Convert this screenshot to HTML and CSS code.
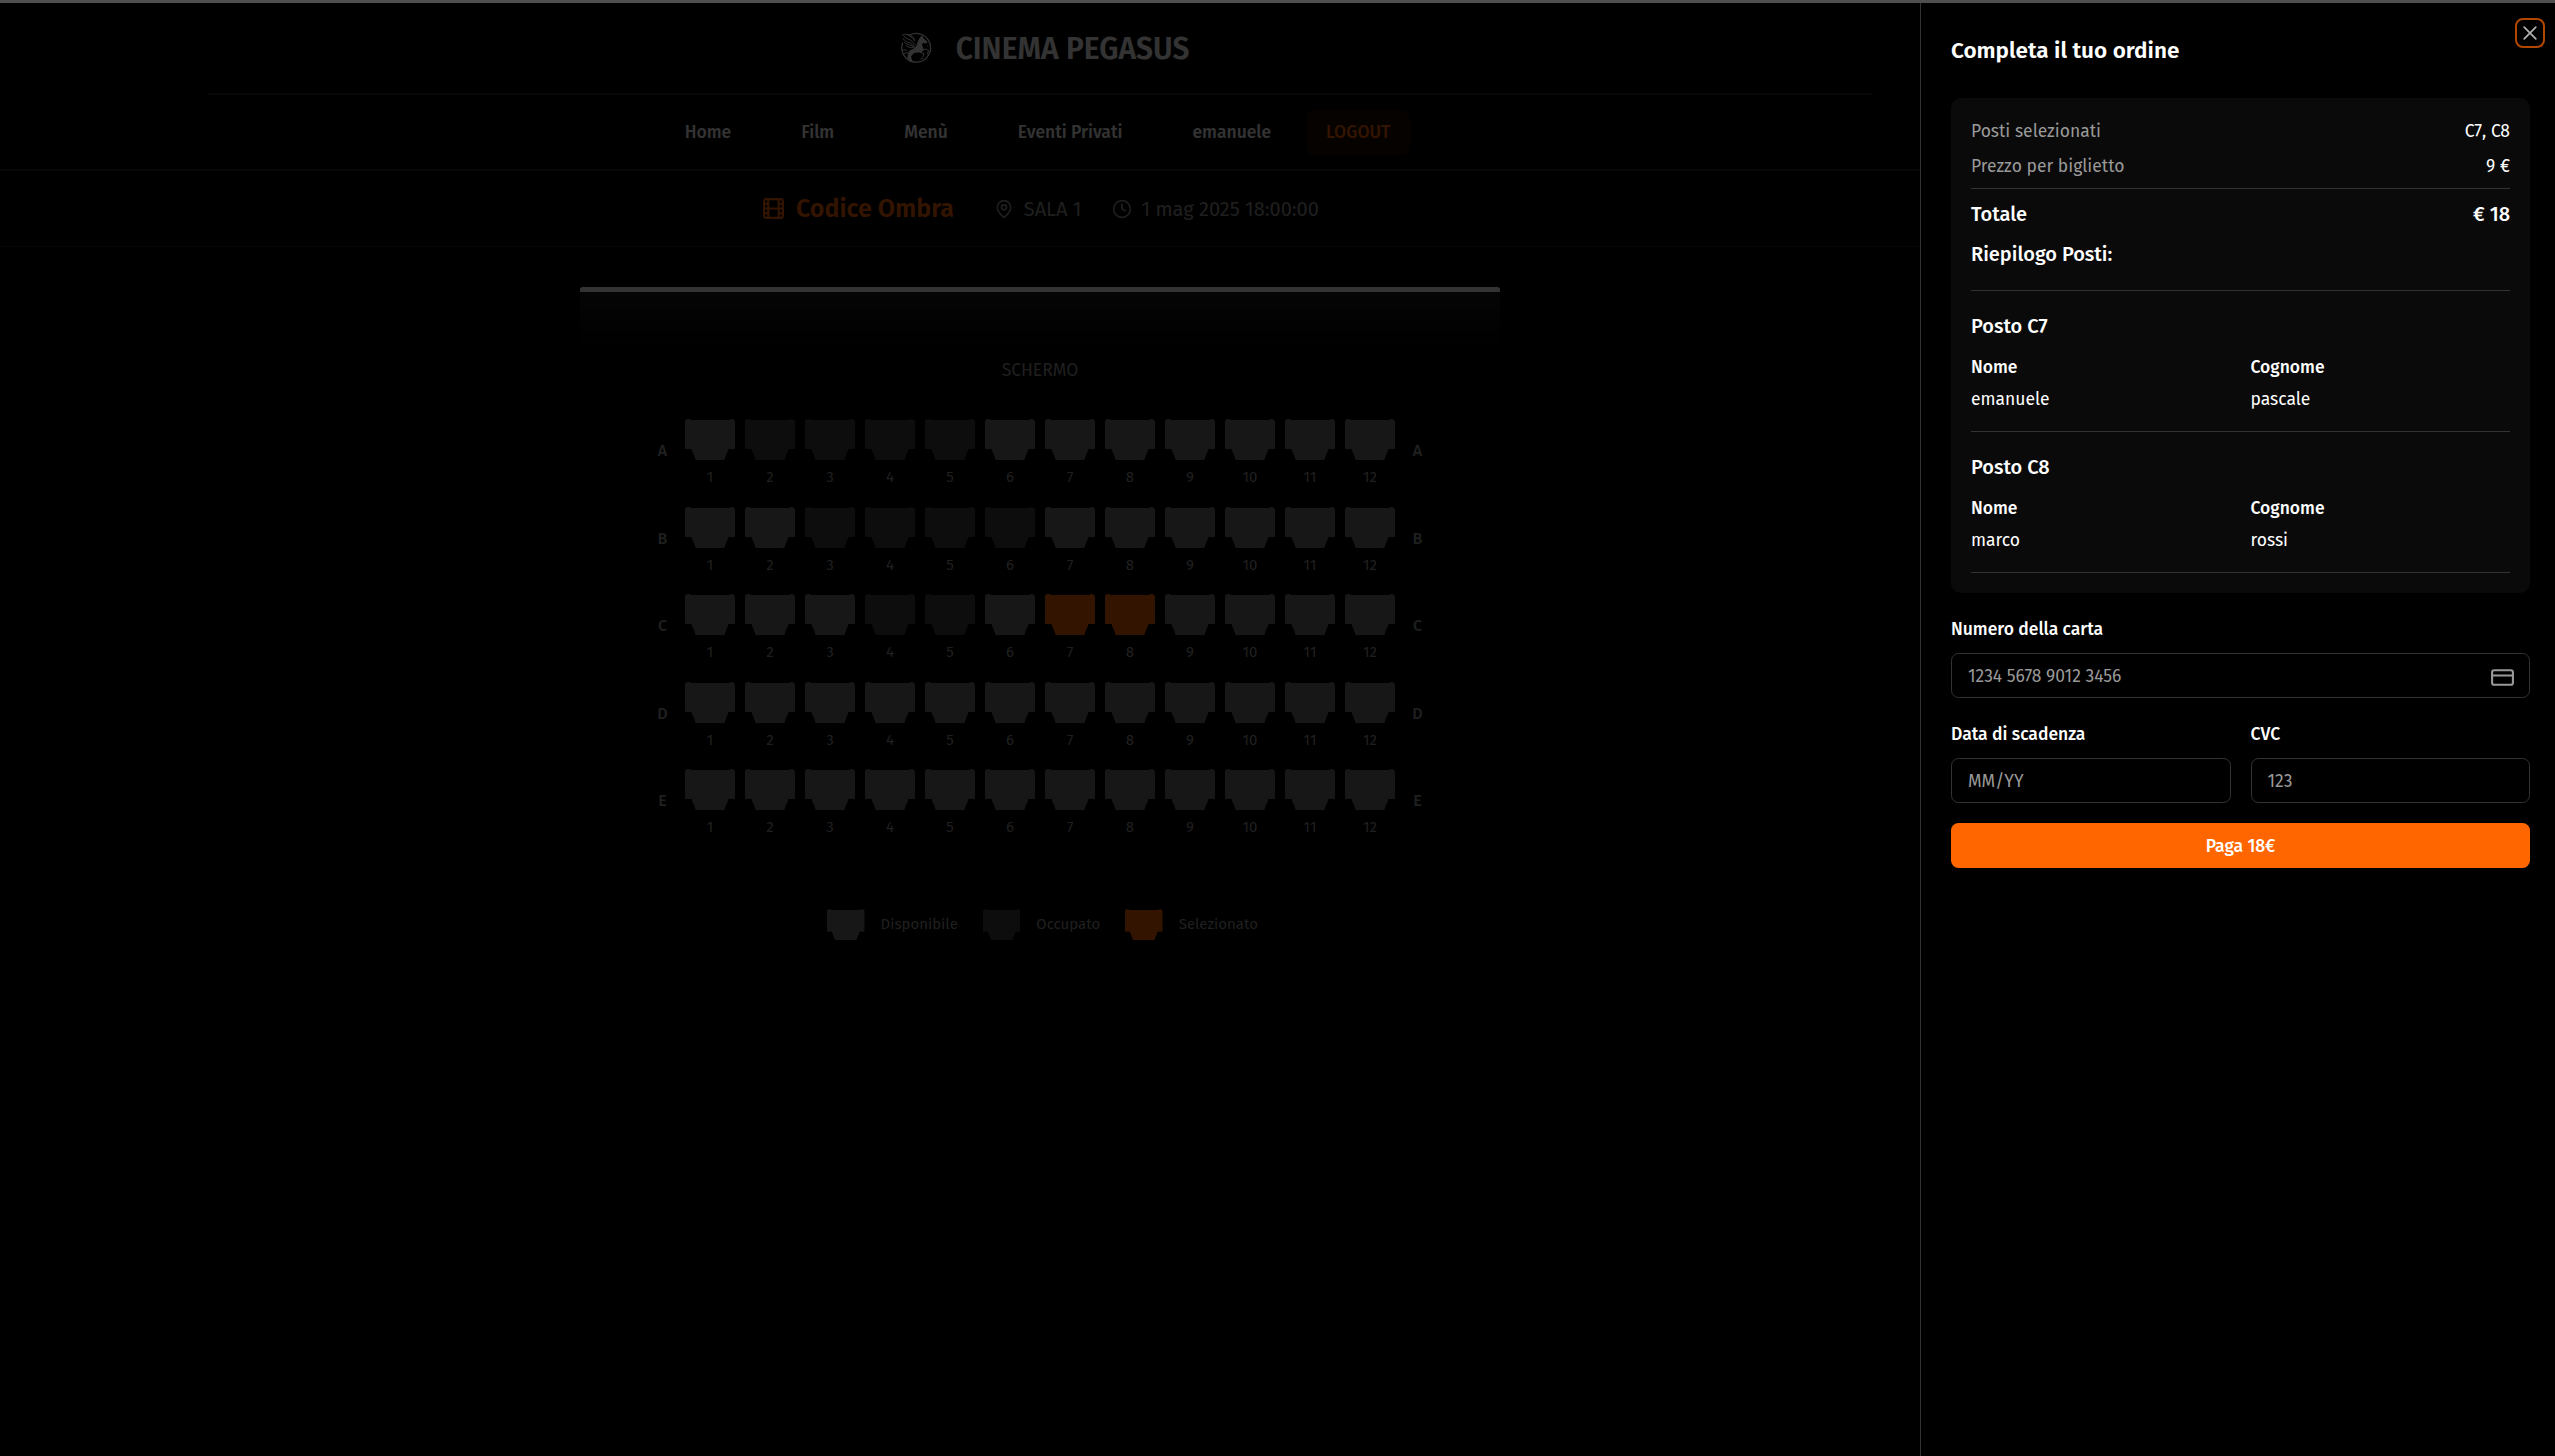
FILE: index.html
```html
<!DOCTYPE html>
<html lang="it">
<head>
<meta charset="utf-8">
<title>Cinema Pegasus</title>
<link rel="stylesheet" href="styles.css">
</head>
<body>
<div class="page">
  <header class="brand">
    <svg class="logo" viewBox="0 0 50 50" fill="none" stroke="currentColor" stroke-linecap="round" stroke-linejoin="round">
      <path d="M19 11.8A14.4 14.4 0 1 1 11.6 20" stroke-width="1.2"/>
      <path d="M11.5 11.5c2 3 4.500 4.500 8 5.500l5 5M12 15.500c2 3 4.500 4 7.500 4.500l4 3.500M13.500 19.500c2 2 4 2.700 6.500 2.700l3 2.300M15.500 23c2 1.500 4 1.700 7 1.700M13 11c4 .6 8 2.500 10.500 7M16.500 11.500c3.500.8 6 2.500 7.500 5" stroke-width="1"/>
      <path d="M29.500 14l2-1.500.6 2.200 4.400 4.300-1.200 1.700-3-1-1.300 1.800 1.500 5c.3 2-2.500 3-5 3l-4.500.5-3 3.500 1.500 5.500h-2.500l-2.500-4 .5-4.500c1-3 3-4.200 5.500-4.500l3-3.500c1-3.500 2-6.500 4-8.500z" fill="currentColor" stroke="none"/>
      <path d="M31 27l4-1 2.500 1.500-1 3.500M29.500 29.500l3.500 1-1 3M20 38l3 .5M12 27c1.500 0 3-.5 4 .5M13 30.500l3.500-.8M30 36l2-1M36.500 23l.5.3" stroke-width="1"/>
    </svg>
    <h1 class="brand-name">CINEMA PEGASUS</h1>
  </header>
  <nav class="nav">
    <a class="nav-link">Home</a>
    <a class="nav-link">Film</a>
    <a class="nav-link">Menù</a>
    <a class="nav-link">Eventi Privati</a>
    <a class="nav-link">emanuele</a>
    <a class="logout">LOGOUT</a>
  </nav>
  <div class="show">
    <div class="show-title">
      <svg class="icon-lg" viewBox="0 0 24 24"><rect x="3" y="3" width="18" height="18" rx="2"/><path d="M7 3v18M17 3v18M3 7.500h4M3 12h18M3 16.500h4M17 7.500h4M17 16.500h4"/></svg>
      <span>Codice Ombra</span>
    </div>
    <div class="show-info">
      <div class="show-item">
        <svg class="icon" viewBox="0 0 24 24"><path d="M20 10c0 5-5.500 10.200-7.400 11.800a1 1 0 0 1-1.200 0C9.500 20.200 4 15 4 10a8 8 0 0 1 16 0"/><circle cx="12" cy="10" r="3"/></svg>
        <span>SALA 1</span>
      </div>
      <div class="show-item">
        <svg class="icon" viewBox="0 0 24 24"><circle cx="12" cy="12" r="10"/><path d="M12 6v6l4 2"/></svg>
        <span>1 mag 2025 18:00:00</span>
      </div>
    </div>
  </div>
  <main class="hall">
    <div class="screen"></div>
    <div class="screen-label">SCHERMO</div>
    <div class="rows" id="rows"></div>
    <div class="legend">
      <div class="legend-item"><svg class="seat-sm free" viewBox="0 0 50 41"><use href="#seat"/></svg><span>Disponibile</span></div>
      <div class="legend-item"><svg class="seat-sm taken" viewBox="0 0 50 41"><use href="#seat"/></svg><span>Occupato</span></div>
      <div class="legend-item"><svg class="seat-sm chosen" viewBox="0 0 50 41"><use href="#seat"/></svg><span>Selezionato</span></div>
    </div>
  </main>
</div>
<svg class="defs" width="0" height="0"><defs><path id="seat" d="M0 2.500Q0 0 3 0T6 1H44Q44.500 0 47 0T50 2.500V29Q50 30 49 30H44.500L43.300 30Q43 33 41 36L40 39.500Q39.500 41 38.500 41H11.500Q10.500 41 10 39.500L9 36Q7 33 6.700 30H1Q0 30 0 29Z"/></defs></svg>
<div class="overlay"></div>
<div class="topbar"></div>
<aside class="panel">
  <button class="close"><svg class="icon" viewBox="0 0 24 24"><path d="M19 5 5 19M5 5l14 14"/></svg></button>
  <h2 class="panel-title">Completa il tuo ordine</h2>
  <section class="summary">
    <div class="line"><span class="muted">Posti selezionati</span><span>C7, C8</span></div>
    <div class="line"><span class="muted">Prezzo per biglietto</span><span>9 €</span></div>
    <hr class="rule">
    <div class="line total"><span>Totale</span><span>€ 18</span></div>
    <h3 class="recap">Riepilogo Posti:</h3>
    <div class="ticket">
      <h4 class="ticket-title">Posto C7</h4>
      <div class="pair">
        <div class="field"><span class="label">Nome</span><span>emanuele</span></div>
        <div class="field"><span class="label">Cognome</span><span>pascale</span></div>
      </div>
    </div>
    <div class="ticket">
      <h4 class="ticket-title">Posto C8</h4>
      <div class="pair">
        <div class="field"><span class="label">Nome</span><span>marco</span></div>
        <div class="field"><span class="label">Cognome</span><span>rossi</span></div>
      </div>
    </div>
    <hr class="rule">
  </section>
  <form class="form">
    <label class="control"><span class="label">Numero della carta</span>
      <span class="input"><span>1234 5678 9012 3456</span><svg class="icon-lg card-icon" viewBox="0 0 24 24"><rect x="2" y="5" width="20" height="14" rx="2"/><path d="M2 10h20"/></svg></span>
    </label>
    <div class="pair">
      <label class="control"><span class="label">Data di scadenza</span><span class="input">MM/YY</span></label>
      <label class="control"><span class="label">CVC</span><span class="input">123</span></label>
    </div>
    <button type="button" class="pay">Paga 18€</button>
  </form>
</aside>
<script src="seats.js"></script>
</body>
</html>
```
FILE: styles.css
```css
* { box-sizing: border-box; margin: 0; padding: 0; }
body {
  height: 1456px;
  overflow: hidden;
  position: relative;
  background: #000;
  color: #fff;
  font-family: "Fira Sans", "Noto Sans", sans-serif;
  font-size: 17.5px;
  line-height: 27px;
}
svg { display: block; flex: none; }
.defs { position: absolute; }
.icon, .icon-lg { width: 20px; height: 20px; fill: none; stroke: currentColor; stroke-width: 2; stroke-linecap: round; stroke-linejoin: round; }
.icon-lg { width: 25px; height: 25px; }

.page { width: 2080px; padding-top: 3px; }
.brand { width: 80%; margin: 0 auto; height: 92px; display: flex; align-items: center; justify-content: center; gap: 15px; border-bottom: 2px solid #262626; }
.logo { width: 50px; height: 50px; }
.brand-name { font-size: 30px; line-height: 40px; font-weight: 600; padding-top: 2px; }
.nav { height: 76px; padding-right: 5px; display: flex; align-items: center; justify-content: center; gap: 30px; border-bottom: 2px solid #262626; font-weight: 500; }
.nav-link { padding: 0 20px; }
.logout { margin-left: -15px; padding: 9px 20px; height: 45px; border-radius: 7.5px; background: #190a00; color: #ff6600; }
.show { height: 76px; display: flex; align-items: center; justify-content: center; gap: 40px; border-bottom: 1px solid #262626; }
.show-title { display: flex; align-items: center; gap: 10px; color: #ff6600; font-size: 25px; line-height: 35px; font-weight: 600; }
.show-title span { padding-top: 1px; }
.show-info { display: flex; gap: 30px; color: #999; font-size: 20px; line-height: 30px; }
.show-item { display: flex; align-items: center; gap: 10px; }

.hall { display: flex; flex-direction: column; align-items: center; padding-top: 40px; color: #999; }
.screen { width: 920px; height: 65px; border-top: 5px solid #fff; border-radius: 2.5px; background: linear-gradient(#1a1a1a, #000); }
.screen-label { margin-top: 5px; }
.rows { margin-top: 35px; display: flex; flex-direction: column; gap: 22.5px; }
.row { display: flex; align-items: center; gap: 10px; height: 65px; }
.row-name { width: 25px; padding-bottom: 2px; text-align: center; font-size: 16px; font-weight: 500; }
.seats { display: flex; gap: 10px; }
.seat { display: flex; flex-direction: column; align-items: center; gap: 7px; font-size: 15px; line-height: 20px; height: 65px; }
.seat-icon { width: 50px; height: 41px; }
.free { fill: #737373; }
.taken { fill: #404040; }
.chosen { fill: #ff6600; }
.legend { display: flex; gap: 25px; margin-top: 75px; padding-left: 5px; font-size: 15px; }
.legend-item { display: flex; align-items: center; gap: 16px; }
.seat-sm { width: 37.5px; height: 31px; }

.overlay { position: absolute; inset: 0; background: rgba(0, 0, 0, .8); }
.topbar { position: absolute; top: 0; left: 0; right: 0; height: 3px; background: #4f4f4f; }

.panel { position: absolute; top: 3px; bottom: 0; left: 1920px; width: 640px; padding: 30px; border-left: 1px solid #333; background: #000; }
.close { position: absolute; top: 15px; right: 15px; width: 30px; height: 30px; display: flex; align-items: center; justify-content: center; border: 2.5px solid #b34700; border-radius: 8px; background: none; color: #b3b3b3; }
.panel-title { font-size: 22.5px; line-height: 35px; font-weight: 600; }
.summary { margin-top: 30px; height: 495px; padding: 20px; border-radius: 10px; background: #0a0a0a; display: flex; flex-direction: column; }
.line { display: flex; justify-content: space-between; margin-bottom: 8px; }
.muted { color: #999; }
.total, .recap, .ticket-title { font-size: 20px; line-height: 30px; font-weight: 500; }
.rule { border: 0; border-top: 1px solid #333; }
.total { margin: 10px 0; }
.recap { margin-bottom: 21px; }
.ticket { border-top: 1px solid #333; padding: 20px 0 18px; }
.ticket-title { margin-bottom: 13px; }
.pair { display: grid; grid-template-columns: 1fr 1fr; gap: 20px; }
.field { display: flex; flex-direction: column; gap: 5px; }
.label { font-weight: 500; }
.form { margin-top: 23px; display: flex; flex-direction: column; gap: 20px; }
.form .pair { margin-top: 3px; }
.control { display: flex; flex-direction: column; gap: 10px; }
.input { height: 45px; display: flex; align-items: center; justify-content: space-between; padding: 2px 14px 0 16px; border: 1px solid #333; border-radius: 7.5px; color: #999; }
.card-icon { margin-top: 1px; }
.pay { height: 45px; padding-top: 1px; border: 0; border-radius: 7.5px; background: #ff6600; color: #fff; font: inherit; font-weight: 500; }
```
FILE: seats.js
```js
const taken = { A: [2, 3, 4, 5], B: [3, 4, 5, 6], C: [4, 5], D: [], E: [] };
const chosen = { C: [7, 8] };

document.getElementById("rows").innerHTML = Object.keys(taken).map((row) => {
  let seats = "";
  for (let n = 1; n <= 12; n++) {
    const state = taken[row].includes(n) ? "taken" : (chosen[row] || []).includes(n) ? "chosen" : "free";
    seats += `<div class="seat"><svg class="seat-icon ${state}" viewBox="0 0 50 41"><use href="#seat"/></svg><span>${n}</span></div>`;
  }
  return `<div class="row"><span class="row-name">${row}</span><div class="seats">${seats}</div><span class="row-name">${row}</span></div>`;
}).join("");
```
